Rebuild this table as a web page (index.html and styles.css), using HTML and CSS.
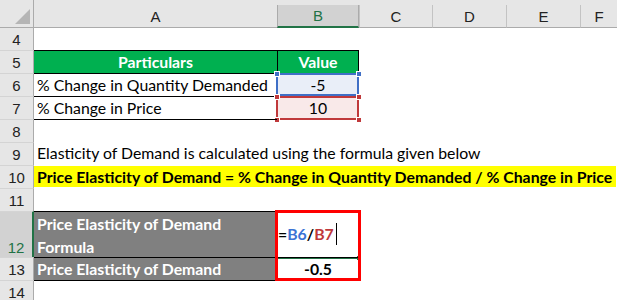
FILE: index.html
```html
<!DOCTYPE html>
<html>
<head>
<meta charset="utf-8">
<link rel="stylesheet" href="styles.css">
</head>
<body>
<div class="sheet">
  <div class="row hdr">
    <div class="corner"><svg width="34" height="28" viewBox="0 0 34 28"><polygon points="30,9 30,24 15,24" fill="#b5b5b5"/></svg></div>
    <div class="ch ch-first">A</div>
    <div class="ch ch-sel">B</div>
    <div class="ch">C</div>
    <div class="ch">D</div>
    <div class="ch">E</div>
    <div class="ch">F</div>
  </div>

  <div class="row r4">
    <div class="rh">4</div>
    <div class="c"></div><div class="c"></div>
  </div>

  <div class="row">
    <div class="rh">5</div>
    <div class="c th">Particulars</div>
    <div class="c th th-b">Value</div>
  </div>

  <div class="row">
    <div class="rh">6</div>
    <div class="c txt bt">% Change in Quantity Demanded</div>
    <div class="c num ref-blue">-5
      <span class="refbox blue"></span>
      <span class="hd hd-tl blue-h"></span><span class="hd hd-tr blue-h"></span>
    </div>
  </div>

  <div class="row">
    <div class="rh">7</div>
    <div class="c txt bt">% Change in Price</div>
    <div class="c num ref-red">10
      <span class="refbox red"></span>
      <span class="hd hd-tl red-h"></span><span class="hd hd-tr red-h"></span>
      <span class="hd hd-bl red-h"></span><span class="hd hd-br red-h"></span>
    </div>
  </div>

  <div class="row">
    <div class="rh">8</div>
    <div class="c bt"></div>
  </div>

  <div class="row">
    <div class="rh">9</div>
    <div class="c txt over">Elasticity of Demand is calculated using the formula given below</div>
  </div>

  <div class="row">
    <div class="rh">10</div>
    <div class="c over"><span class="hl">Price Elasticity of Demand = % Change in Quantity Demanded / % Change in Price</span></div>
  </div>

  <div class="row">
    <div class="rh">11</div>
  </div>

  <div class="row r12">
    <div class="rh rh-sel">12</div>
    <div class="c gray bt wrap">Price Elasticity of Demand Formula</div>
    <div class="c formula">
      <span class="eq">=</span><span class="fb">B6</span><span class="eq">/</span><span class="fr">B7</span><span class="caret"></span>
      <span class="activebar"></span><span class="activehandle"></span>
      <span class="redbox"></span>
    </div>
  </div>

  <div class="row">
    <div class="rh">13</div>
    <div class="c gray bt">Price Elasticity of Demand</div>
    <div class="c num bold">-0.5</div>
  </div>

  <div class="row">
    <div class="rh">14</div>
    <div class="c bt"></div>
  </div>
</div>
</body>
</html>
```

FILE: styles.css
```css
html, body {
  margin: 0;
  padding: 0;
  background: #ffffff;
  overflow: hidden;
}

.sheet {
  width: 617px;
  height: 300px;
  overflow: hidden;
  font-family: "Lato", "Liberation Sans", sans-serif;
  font-size: 15.8px;
  color: #000;
}

.row {
  display: grid;
  grid-template-columns: 34px 243px 82px 73px 74px 74px 1fr;
  height: 23px;
}

.hdr {
  height: 28px;
  background: #e6e6e6;
  align-items: end;
}

.corner {
  height: 28px;
  box-sizing: border-box;
  border-right: 1px solid #ababab;
  border-bottom: 1px solid #ababab;
}

.corner svg { display: block; }

.ch {
  height: 23px;
  box-sizing: border-box;
  border-left: 1px solid #c3c3c3;
  border-bottom: 1px solid #ababab;
  display: flex;
  align-items: center;
  justify-content: center;
  color: #222;
  font-family: "Liberation Sans", sans-serif;
  font-size: 15px;
}

.ch-first { border-left: none; }

.ch-sel {
  background: #d2d2d2;
  border-bottom: 2px solid #217346;
  color: #217346;
  border-left-color: #ababab;
  border-right: 1px solid #ababab;
}

.r4 { height: 22px; }
.r12 { height: 46px; }

.rh {
  box-sizing: border-box;
  background: #e6e6e6;
  border-right: 1px solid #ababab;
  border-top: 1px solid #d4d4d4;
  display: flex;
  align-items: center;
  justify-content: center;
  color: #222;
  font-family: "Liberation Sans", sans-serif;
  font-size: 15px;
}

.r4 .rh { border-top: none; }

.rh-sel {
  background: #d2d2d2;
  color: #217346;
  border-right: 2px solid #217346;
  align-items: flex-end;
  padding-bottom: 2px;
}

.c {
  box-sizing: border-box;
  position: relative;
  line-height: 22px;
  white-space: nowrap;
}

.bt { border-top: 1px solid #000; }

.txt { padding-left: 3px; }

.over { overflow: visible; }

.th {
  background: #00b050;
  color: #fff;
  font-weight: bold;
  text-align: center;
  border-top: 1px solid #000;
}

.th-b {
  border-left: 1px solid #000;
  border-right: 1px solid #000;
}

.num {
  text-align: center;
  border-top: 1px solid #000;
}

.bold { font-weight: bold; }

.ref-blue { background: #e9eef8; }
.ref-red { background: #f9e9e9; }

.refbox {
  position: absolute;
  left: -1px;
  top: -1px;
  right: 0;
  bottom: 0;
  border: 2px solid;
}

.refbox.blue { border-color: #3f6fc6; }
.refbox.red { border-color: #c0393b; bottom: -1px; }

.hd {
  position: absolute;
  width: 4px;
  height: 4px;
  border: 1px solid #fff;
}

.blue-h { background: #3f6fc6; }
.red-h { background: #c0393b; }

.hd-tl { left: -3px; top: -3px; }
.hd-tr { right: -3px; top: -3px; }
.hd-bl { left: -3px; bottom: -4px; }
.hd-br { right: -3px; bottom: -4px; }

.hl {
  display: inline-block;
  background: #ffff00;
  font-weight: bold;
  height: 21px;
  line-height: 21px;
  margin-top: 1px;
  padding: 0 4px 0 3px;
}

.gray {
  background: #808080;
  color: #fff;
  font-weight: bold;
  padding-left: 3px;
}

.wrap {
  white-space: normal;
  line-height: 23px;
  padding-right: 20px;
}

.formula {
  font-weight: bold;
  display: flex;
  align-items: center;
  padding-left: 1px;
  padding-bottom: 2px;
}

.eq { color: #000; }
.fb { color: #3b74d4; }
.fr { color: #c0393b; }

.caret {
  display: inline-block;
  width: 1px;
  height: 22px;
  background: #000;
  margin-left: 2px;
}

.activebar {
  position: absolute;
  left: 1px;
  right: 1px;
  bottom: -1px;
  height: 2px;
  background: #217346;
}

.activehandle {
  position: absolute;
  right: -1px;
  bottom: -2px;
  width: 3px;
  height: 4px;
  background: #217346;
}

.redbox {
  position: absolute;
  left: -2px;
  top: -1px;
  width: 86px;
  height: 71px;
  box-sizing: border-box;
  border: 3px solid #ff0000;
  z-index: 2;
}
```
